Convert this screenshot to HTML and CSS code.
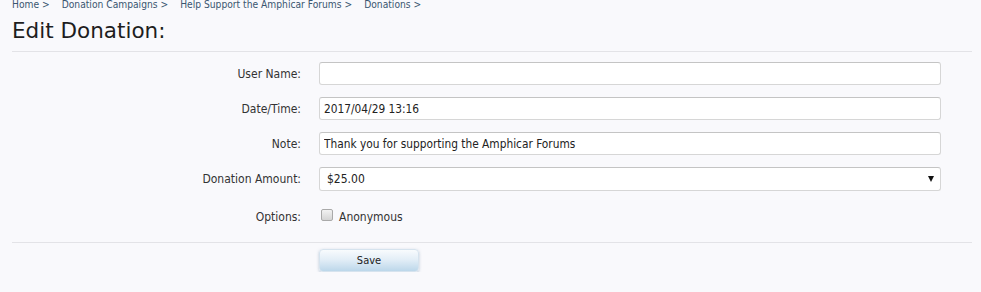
FILE: index.html
```html
<!DOCTYPE html>
<html>
<head>
<meta charset="utf-8">
<link rel="stylesheet" href="styles.css">
</head>
<body>
<div class="page">
  <nav class="crumbs">
    <a class="crumb" href="#">Home &gt;</a>
    <a class="crumb" href="#">Donation Campaigns &gt;</a>
    <a class="crumb" href="#">Help Support the Amphicar Forums &gt;</a>
    <a class="crumb" href="#">Donations &gt;</a>
  </nav>
  <h1 class="title">Edit Donation:</h1>
  <form class="form">
    <div class="fields">
      <label class="label">User Name:</label>
      <input class="text" type="text" value="">
      <label class="label">Date/Time:</label>
      <input class="text" type="text" value="2017/04/29 13:16">
      <label class="label">Note:</label>
      <input class="text" type="text" value="Thank you for supporting the Amphicar Forums">
      <label class="label">Donation Amount:</label>
      <div class="selectwrap">
        <select class="select"><option>$25.00</option></select>
        <span class="arrow"></span>
      </div>
      <label class="label opt">Options:</label>
      <label class="check"><input class="box" type="checkbox"> Anonymous</label>
    </div>
    <div class="submit">
      <button class="button" type="button">Save</button>
    </div>
  </form>
</div>
</body>
</html>
```
FILE: styles.css
```css
html, body {
  margin: 0;
  padding: 0;
  background: #f9f9fc;
}
body {
  font-family: "DejaVu Sans Condensed", "DejaVu Sans", sans-serif;
  color: #333;
}
.page {
  width: 960px;
  padding-left: 12px;
}
.crumbs {
  display: flex;
  gap: 12px;
  font-size: 10.2px;
  line-height: 11px;
  height: 11px;
  margin-top: -1px;
}
.crumb {
  color: #3a5670;
  text-decoration: none;
}
.title {
  margin: 8px 0 0;
  font-family: "DejaVu Sans", sans-serif;
  font-size: 21.5px;
  line-height: 26px;
  font-weight: normal;
  color: #1e1e1e;
  padding-bottom: 7px;
  border-bottom: 1px solid #e3e3e7;
}
.form {
  margin: 0;
}
.fields {
  display: grid;
  grid-template-columns: 289px 622px;
  column-gap: 18px;
  row-gap: 12px;
  align-items: center;
  padding-top: 10px;
  padding-bottom: 15px;
  border-bottom: 1px solid #e3e3e7;
}
.label {
  text-align: right;
  font-size: 12px;
  color: #333;
}
.opt {
  padding-top: 3px;
}
.text {
  box-sizing: border-box;
  height: 23px;
  width: 622px;
  margin: 0;
  padding: 0 4px;
  font-family: inherit;
  font-size: 11.8px;
  color: #222;
  background: #fff;
  border: 1px solid #d6d6d6;
  border-top-color: #c4c4c4;
  border-radius: 3px;
  outline: none;
}
.selectwrap {
  position: relative;
  height: 24px;
}
.select {
  box-sizing: border-box;
  appearance: none;
  -webkit-appearance: none;
  height: 24px;
  width: 622px;
  margin: 0;
  padding: 0 7px;
  font-family: inherit;
  font-size: 12px;
  color: #222;
  background: #fff;
  border: 1px solid #d6d6d6;
  border-top-color: #c4c4c4;
  border-radius: 3px;
}
.arrow {
  position: absolute;
  right: 7px;
  top: 9px;
  width: 0;
  height: 0;
  border-left: 3px solid transparent;
  border-right: 3px solid transparent;
  border-top: 6px solid #111;
}
.check {
  box-sizing: border-box;
  display: flex;
  align-items: center;
  height: 24px;
  font-size: 12px;
  color: #333;
  gap: 6px;
  padding-top: 3px;
}
.box {
  appearance: none;
  -webkit-appearance: none;
  box-sizing: border-box;
  margin: -4px 0 0 2px;
  width: 12px;
  height: 12px;
  border: 1px solid #a9a9a9;
  border-radius: 2px;
  background: linear-gradient(#f2f2f2, #d4d4d4);
}
.submit {
  padding: 6px 0 0 307px;
}
.button {
  box-sizing: border-box;
  width: 100px;
  height: 23px;
  font-family: inherit;
  font-size: 11px;
  color: #222;
  border: 1px solid #d6e3ee;
  border-radius: 4px;
  background: linear-gradient(#f8fbfd 0%, #e3eef7 45%, #bcd7ea 100%);
  box-shadow: 0 1px 3px rgba(120, 150, 180, 0.5);
  padding: 0;
}
```
